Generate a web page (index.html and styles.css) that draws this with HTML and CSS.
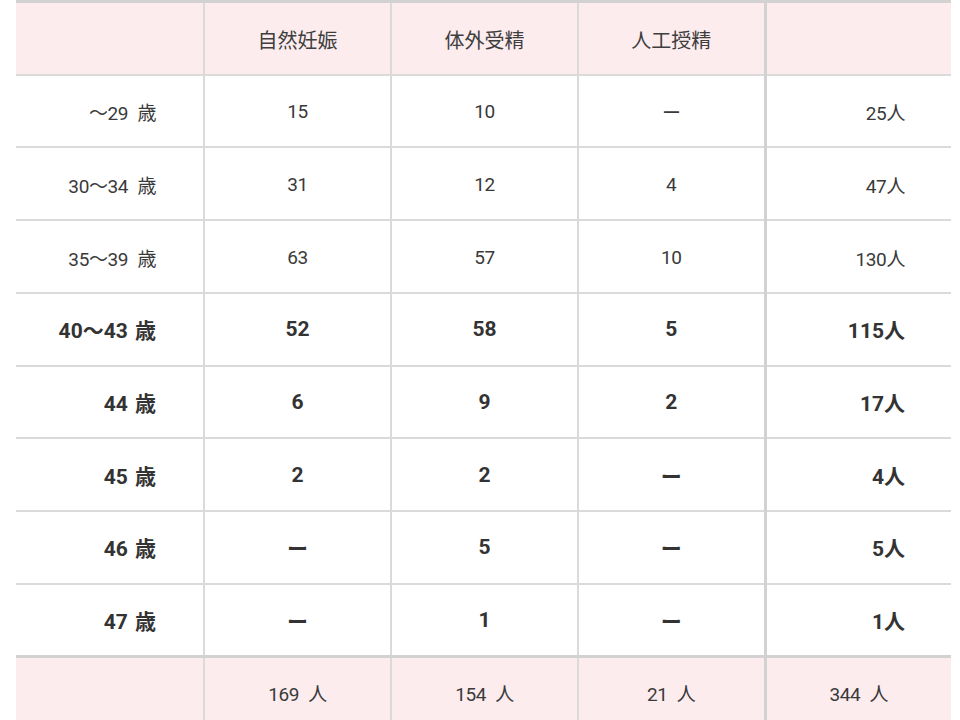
FILE: index.html
```html
<!DOCTYPE html>
<html lang="ja">
<head>
<meta charset="utf-8">
<link rel="stylesheet" href="styles.css">
</head>
<body>
<table class="stats">
  <colgroup>
    <col class="c-age"><col class="c-num"><col class="c-num"><col class="c-num"><col class="c-total">
  </colgroup>
  <thead>
    <tr class="head">
      <th></th>
      <th>自然妊娠</th>
      <th>体外受精</th>
      <th>人工授精</th>
      <th class="sep"></th>
    </tr>
  </thead>
  <tbody>
    <tr><td class="age">〜29 歳</td><td>15</td><td>10</td><td>ー</td><td class="sep total">25人</td></tr>
    <tr><td class="age">30〜34 歳</td><td>31</td><td>12</td><td>4</td><td class="sep total">47人</td></tr>
    <tr><td class="age">35〜39 歳</td><td>63</td><td>57</td><td>10</td><td class="sep total">130人</td></tr>
    <tr class="strong"><td class="age">40〜43 歳</td><td>52</td><td>58</td><td>5</td><td class="sep total">115人</td></tr>
    <tr class="strong"><td class="age">44 歳</td><td>6</td><td>9</td><td>2</td><td class="sep total">17人</td></tr>
    <tr class="strong"><td class="age">45 歳</td><td>2</td><td>2</td><td>ー</td><td class="sep total">4人</td></tr>
    <tr class="strong"><td class="age">46 歳</td><td>ー</td><td>5</td><td>ー</td><td class="sep total">5人</td></tr>
    <tr class="strong"><td class="age">47 歳</td><td>ー</td><td>1</td><td>ー</td><td class="sep total">1人</td></tr>
  </tbody>
  <tfoot>
    <tr class="foot"><td></td><td>169 人</td><td>154 人</td><td>21 人</td><td class="sep">344 人</td></tr>
  </tfoot>
</table>
</body>
</html>
```
FILE: styles.css
```css
html, body {
  margin: 0;
  padding: 0;
  background: #ffffff;
}
body {
  padding: 0 9px 0 16px;
  font-family: Roboto, "Noto Sans CJK JP", sans-serif;
  color: #3a3a3a;
}
.stats {
  width: 935px;
  border-collapse: collapse;
  table-layout: fixed;
  border-top: 3px solid #d2d2d2;
}
.c-age { width: 188px; }
.c-num { width: 187px; }
.c-total { width: 186px; }
.stats th, .stats td {
  border: 2px solid #dadada;
  padding: 0;
  text-align: center;
  vertical-align: middle;
  font-size: 19px;
  font-weight: 400;
  letter-spacing: -0.4px;
  word-spacing: 5px;
  height: 72.75px;
  box-sizing: border-box;
}
.stats tr > :first-child { border-left: none; }
.stats tr > :last-child { border-right: none; }
.stats .head th {
  background: #fcecee;
  font-family: "Noto Sans CJK JP", sans-serif;
  font-size: 20px;
  letter-spacing: 0;
  color: #3e3e3e;
  border-top: none;
  height: 73px;
  padding-top: 2px;
}
.stats .sep { border-left: 3px solid #d2d2d2; }
.stats .age {
  text-align: right;
  padding-right: 47px;
}
.stats .total {
  text-align: right;
  padding-right: 46px;
}
.stats tbody td { padding-top: 2px; }
.stats .strong td {
  font-weight: 700;
  font-size: 21px;
  letter-spacing: 0;
  word-spacing: 2px;
  color: #333333;
  padding-top: 0;
}
.stats .foot td {
  background: #fcecee;
  border-top: 3px solid #d2d2d2;
  border-bottom: none;
  height: 76px;
  padding-bottom: 6px;
}
```
